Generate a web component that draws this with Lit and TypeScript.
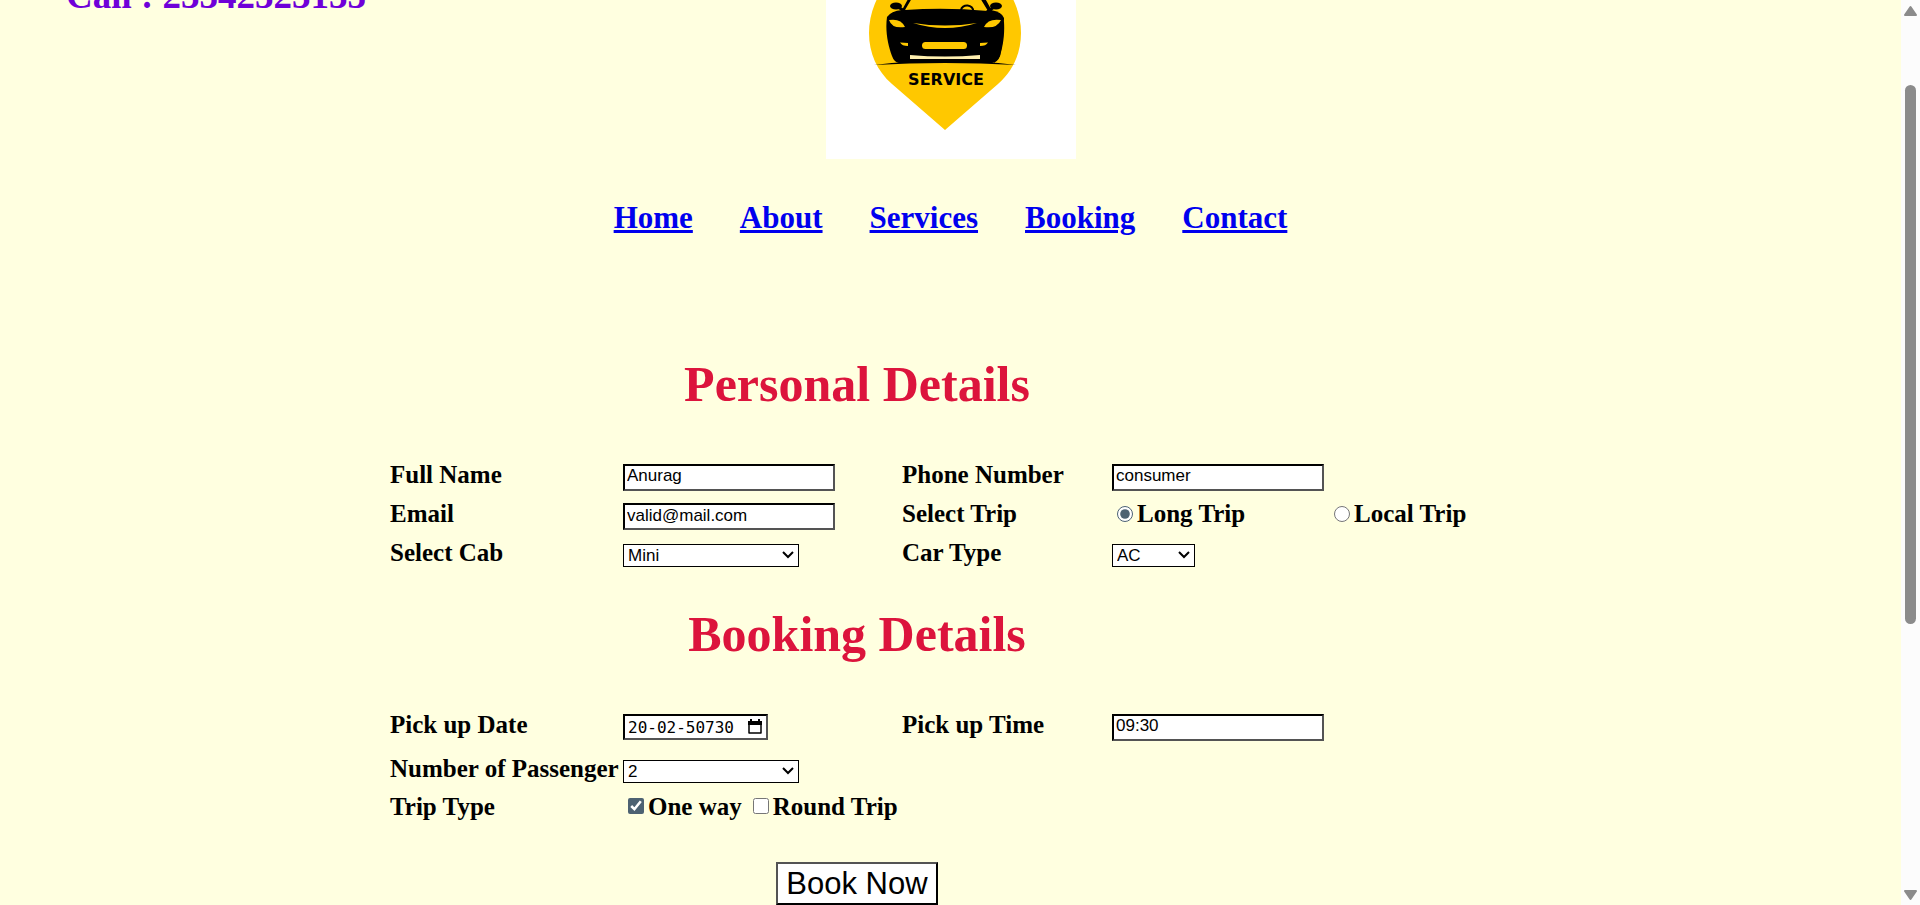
import { LitElement, html, css, svg } from "lit";
import { customElement } from "lit/decorators.js";

const logo = svg`
  <path d="M119 48A76 76 0 0 0 43 124C43 144 51 162 66 175L119 221L172 175C187 162 195 144 195 124A76 76 0 0 0 119 48Z" fill="#ffc800"/>
  <path d="M76 101L87 81Q90 75 97 75H144Q151 75 155 82L166 102L178 113C179 128 176 140 174 147Q172 153 166 154H73Q68 153 66 147C62 136 59 122 61 108Q65 102 76 101Z" fill="#000"/>
  <path d="M79 101L89 84Q92 79 98 79H143Q148 79 151 84L162 102Q120 98 79 101Z" fill="#ffc800"/>
  <path d="M165 101Q176 103 178 109Q178 130 174 147L168 154Z" fill="#000"/>
  <path d="M135 101a6 5 0 0 1 12 1" fill="none" stroke="#000" stroke-width="2"/>
  <ellipse cx="70" cy="97" rx="6" ry="3.5" fill="#000"/>
  <ellipse cx="170" cy="97" rx="6" ry="3.5" fill="#000"/>
  <path d="M72 98L80 103M168 98L161 103" stroke="#000" stroke-width="3"/>
  <path d="M63 111Q75 109 79 118Q66 120 63 111ZM175 111Q162 109 158 118Q171 120 175 111Z" fill="#ffc800"/>
  <path d="M87 114Q119 119 151 114Q119 124 87 114Z" fill="#ffc800"/>
  <rect x="96" y="133" width="45" height="7" rx="3.5" fill="#ffc800"/>
  <path d="M74 133.500L82 134V137Q76 137 74 133.500ZM162 133.500L154 134V137Q160 137 162 133.500Z" fill="#ffc800"/>
  <path d="M84 146Q119 149 154 146V150H84Z" fill="#fff0b0"/>
  <path d="M48 156Q119 147 190 156Q119 152 48 156Z" fill="#000"/>
`;

@customElement("app-root")
export class AppRoot extends LitElement {
  static styles = css`
    :host {
      display: flex;
      height: 100vh;
      overflow: hidden;
      background: #ffffe0;
      color: #000;
      font-family: "Liberation Serif", "Times New Roman", serif;
    }
    .page { flex: 1; min-width: 0; overflow: hidden; }
    .top {
      display: grid;
      grid-template-columns: 1fr 250px 1fr;
      margin-top: -91px;
    }
    .call {
      margin: 65px 0 0 66px;
      font-size: 37px;
      line-height: 44px;
      font-weight: bold;
      color: #6f00d8;
    }
    .logo { display: block; width: 250px; height: 250px; background: #fff; }
    .brand { font: bold 16px "DejaVu Sans", sans-serif; }
    nav {
      display: flex;
      justify-content: center;
      gap: 47px;
      padding: 41px 0 0;
      font-size: 31px;
      line-height: 36px;
      font-weight: bold;
    }
    a { color: #0000ee; }
    form { width: max-content; margin: 0 auto; padding-top: 119px; }
    .fields {
      display: grid;
      grid-template-columns: 233px 279px 210px 217px 182px;
      align-items: center;
      font-size: 25px;
      line-height: 29px;
      font-weight: bold;
    }
    .personal { grid-template-rows: 99px 40px 39px 38px; }
    .booking { grid-template-rows: 129px 48px 40px 36px; }
    h1 {
      grid-column: 1 / -1;
      align-self: start;
      width: 934px;
      margin: 0;
      text-align: center;
      font-size: 50px;
      line-height: 58px;
      color: #dc143c;
    }
    .booking h1 { padding-top: 34px; }
    .first { grid-column: 1; }
    .text, select, .date {
      box-sizing: border-box;
      margin: 6px 0 0;
      background: #fff;
      color: #000;
      border-radius: 0;
      font: 17px "Liberation Sans", Arial, sans-serif;
    }
    .text { width: 212px; height: 27px; padding: 1px 2px 3px; border: 2px inset #000; }
    select {
      appearance: none;
      width: 176px;
      height: 23px;
      padding: 0 20px 0 4px;
      border: 1px solid #000;
      background: #fff url("data:image/svg+xml,%3Csvg xmlns='http://www.w3.org/2000/svg' width='12' height='8'%3E%3Cpath d='M1 1L6 6L11 1' fill='none' stroke='%23000' stroke-width='2'/%3E%3C/svg%3E") no-repeat right 4px center;
    }
    .short { width: 83px; }
    .date {
      display: flex;
      align-items: center;
      width: 145px;
      height: 26px;
      padding: 0 4px 0 3px;
      border: 2px inset #000;
    }
    .date input {
      flex: 1;
      min-width: 0;
      padding: 0;
      border: 0;
      background: none;
      color: #000;
      font: 16px "DejaVu Sans Mono", monospace;
    }
    .date button { display: flex; padding: 0; border: 0; background: none; }
    .choice { display: flex; align-items: center; gap: 4px; padding-left: 5px; white-space: nowrap; }
    .choice input { width: 16px; height: 16px; margin: 0; accent-color: #4d6272; }
    .choices { display: flex; gap: 6px; }
    .actions { display: flex; justify-content: center; width: 934px; padding-top: 38px; }
    .submit {
      padding: 1px 8px;
      border: 2px outset #000;
      background: #fff;
      color: #000;
      font: 31px/37px "Liberation Sans", Arial, sans-serif;
    }
    .scrollbar {
      display: flex;
      flex-direction: column;
      align-items: center;
      width: 19px;
      padding: 5px 0 4px;
      box-sizing: border-box;
      background: #fcfcfc;
    }
    .track { flex: 1; display: flex; flex-direction: column; padding: 69px 0 0; }
    .thumb { width: 11px; height: 67%; border-radius: 6px; background: #8b8b8b; }
    .arrow { display: block; fill: #8b8b8b; stroke: #8b8b8b; stroke-width: 2; stroke-linejoin: round; }
  `;

  render() {
    return html`
      <div class="page">
        <header class="top">
          <div class="call">Call : 23342323133</div>
          <svg class="logo" viewBox="0 0 250 250" role="img" aria-label="Car service">
            ${logo}
            <text class="brand" x="120" y="176" text-anchor="middle">SERVICE</text>
          </svg>
        </header>
        <nav>
          ${["Home", "About", "Services", "Booking", "Contact"].map(
            (name) => html`<a href="#${name.toLowerCase()}">${name}</a>`
          )}
        </nav>
        <form>
          <section class="fields personal">
            <h1>Personal Details</h1>
            <label class="first" for="name">Full Name</label>
            <input class="text" id="name" type="text" value="Anurag" />
            <label for="phone">Phone Number</label>
            <input class="text" id="phone" type="text" value="consumer" />
            <label class="first" for="email">Email</label>
            <input class="text" id="email" type="text" value="valid@mail.com" />
            <span>Select Trip</span>
            <label class="choice"><input type="radio" name="trip" checked />Long Trip</label>
            <label class="choice"><input type="radio" name="trip" />Local Trip</label>
            <label class="first" for="cab">Select Cab</label>
            <select id="cab"><option>Mini</option></select>
            <label for="car">Car Type</label>
            <select class="short" id="car"><option>AC</option></select>
          </section>
          <section class="fields booking">
            <h1>Booking Details</h1>
            <label class="first" for="date">Pick up Date</label>
            <div class="date">
              <input id="date" type="text" value="20-02-50730" />
              <button type="button" aria-label="Open calendar">
                <svg width="14" height="16" viewBox="0 0 14 16">
                  <path d="M1 3H13V14H1Z" fill="none" stroke="#000" stroke-width="1.5" stroke-linejoin="round"/>
                  <path d="M0 2H14V6H0ZM2 0H4V3H2ZM10 0H12V3H10Z"/>
                </svg>
              </button>
            </div>
            <label for="time">Pick up Time</label>
            <input class="text" id="time" type="text" value="09:30" />
            <label class="first" for="passengers">Number of Passenger</label>
            <select id="passengers"><option>2</option></select>
            <span class="first">Trip Type</span>
            <div class="choices">
              <label class="choice"><input type="checkbox" checked />One way</label>
              <label class="choice"><input type="checkbox" />Round Trip</label>
            </div>
          </section>
          <div class="actions"><button class="submit" type="button">Book Now</button></div>
        </form>
      </div>
      <div class="scrollbar" aria-hidden="true">
        <svg class="arrow" width="13" height="11" viewBox="0 0 13 11"><path d="M6.5 2L12 10H1Z"/></svg>
        <div class="track"><div class="thumb"></div></div>
        <svg class="arrow" width="13" height="11" viewBox="0 0 13 11"><path d="M6.5 9L12 1H1Z"/></svg>
      </div>
    `;
  }
}
